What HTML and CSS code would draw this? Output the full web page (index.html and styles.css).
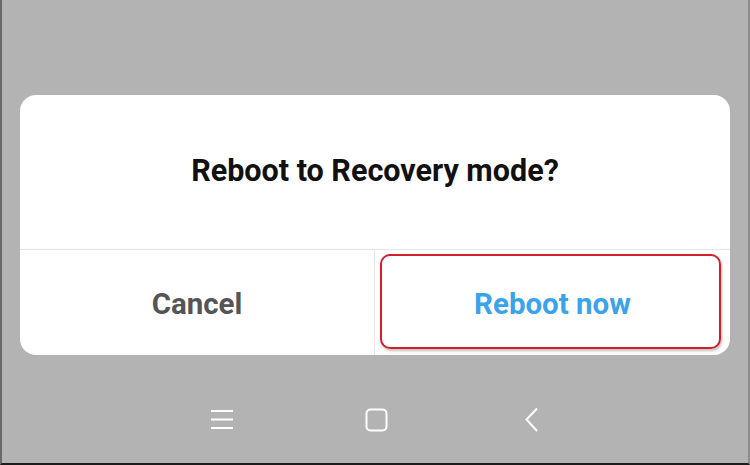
FILE: index.html
```html
<!DOCTYPE html>
<html>
<head>
<meta charset="utf-8">
<link rel="stylesheet" href="styles.css">
</head>
<body>
<div class="screen">
  <div class="dialog">
    <div class="title">Reboot to Recovery mode?</div>
    <div class="actions">
      <div class="btn cancel">Cancel</div>
      <div class="btn-cell">
        <div class="btn reboot highlight">Reboot now</div>
      </div>
    </div>
  </div>
  <div class="nav">
    <svg class="icon" width="26" height="24" viewBox="0 0 26 24">
      <path d="M2 3h22M2 11.5h22M2 20h22" stroke="#fff" stroke-width="2" fill="none"/>
    </svg>
    <svg class="icon" width="26" height="24" viewBox="0 0 26 24">
      <rect x="2.5" y="1.5" width="20" height="21" rx="4" stroke="#fff" stroke-width="2" fill="none"/>
    </svg>
    <svg class="icon" width="26" height="24" viewBox="0 0 26 24">
      <path d="M18 0.5L7.5 11.5L18 23" stroke="#fff" stroke-width="2" fill="none"/>
    </svg>
  </div>
</div>
</body>
</html>
```
FILE: styles.css
```css
html, body {
  margin: 0;
  padding: 0;
}
body {
  width: 750px;
  height: 465px;
  overflow: hidden;
  font-family: Roboto, "Liberation Sans", sans-serif;
}
.screen {
  box-sizing: border-box;
  width: 750px;
  height: 465px;
  background: #b3b3b3;
  border-left: 2px solid #6a6a6a;
  border-right: 2px solid #8c8c8c;
  border-bottom: 2px solid #1c1c1c;
  padding: 95px 18px 0 18px;
  display: flex;
  flex-direction: column;
}
.dialog {
  background: #fff;
  border-radius: 16px;
  height: 260px;
  display: flex;
  flex-direction: column;
  overflow: hidden;
}
.title {
  height: 155px;
  border-bottom: 1px solid #e6e6e6;
  display: flex;
  align-items: center;
  justify-content: center;
  font-weight: 700;
  font-size: 30.5px;
  color: #111;
  padding-bottom: 3px;
  box-sizing: border-box;
}
.actions {
  flex: 1;
  display: flex;
}
.btn {
  display: flex;
  align-items: center;
  justify-content: center;
  font-weight: 700;
  font-size: 29.5px;
}
.cancel {
  width: 355px;
  color: #555;
  border-right: 1px solid #e6e6e6;
  padding-top: 2px;
  box-sizing: border-box;
}
.btn-cell {
  flex: 1;
  padding: 4px 9px 6px 5px;
  display: flex;
}
.reboot {
  flex: 1;
  color: #3ba3ea;
  padding: 4px 0 0 4px;
}
.highlight {
  border: 2px solid #d21f2c;
  border-radius: 10px;
  box-shadow: 1px 2px 3px rgba(0,0,0,0.25);
}
.nav {
  flex: 1;
  display: flex;
  justify-content: center;
  align-items: center;
  gap: 129px;
  padding-top: 21px;
  padding-left: 4px;
}
.icon {
  display: block;
}
```
